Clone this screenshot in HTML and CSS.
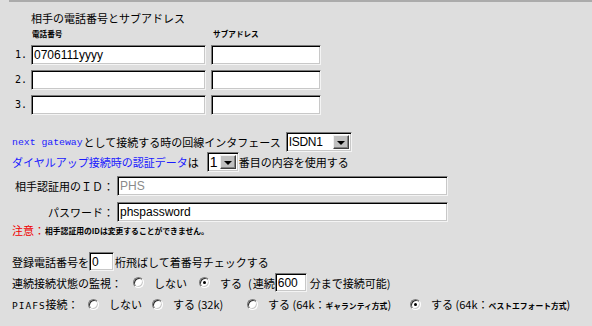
FILE: index.html
```html
<!DOCTYPE html>
<html lang="ja">
<head>
<meta charset="utf-8">
<title>相手の電話番号とサブアドレス</title>
<link rel="stylesheet" href="styles.css">
</head>
<body>
<div class="topline"></div>
<div class="page">
  <div class="heading">相手の電話番号とサブアドレス</div>
  <div class="sublabels">
    <span class="sub-tel">電話番号</span>
    <span class="sub-addr">サブアドレス</span>
  </div>
  <div class="numbers">
    <span class="num">1.</span><input class="field tel" type="text" value="0706111yyyy"><input class="field addr" type="text" value="">
    <span class="num">2.</span><input class="field tel" type="text" value=""><input class="field addr" type="text" value="">
    <span class="num">3.</span><input class="field tel" type="text" value=""><input class="field addr" type="text" value="">
  </div>

  <div class="row gw">
    <span class="blue mono">next gateway</span><span>として接続する時の回線インタフェース</span>
    <span class="select sel-isdn"><span class="sel-val">ISDN1</span><span class="sel-btn"><span class="tri"></span></span></span>
  </div>
  <div class="row dial">
    <span class="blue">ダイヤルアップ接続時の認証データ</span><span>は</span>
    <span class="select sel-num"><span class="sel-val">1</span><span class="sel-btn"><span class="tri"></span></span></span>
    <span>番目の内容を使用する</span>
  </div>
  <div class="row auth id">
    <span class="auth-label">相手認証用のＩＤ：</span>
    <input class="field wide" type="text" value="PHS" disabled>
  </div>
  <div class="row auth pw">
    <span class="auth-label">パスワード：</span>
    <input class="field wide" type="text" value="phspassword">
  </div>
  <div class="row note">
    <span class="red">注意：</span><span class="small">相手認証用のIDは変更することができません。</span>
  </div>

  <div class="row reg">
    <span>登録電話番号を</span><input class="field skip" type="text" value="0"><span>桁飛ばして着番号チェックする</span>
  </div>
  <div class="row mon">
    <span class="lab-mon">連続接続状態の監視：</span>
    <label class="opt o-mon1"><input type="radio" name="mon"><span>しない</span></label>
    <label class="opt"><input type="radio" name="mon" checked><span>する<span class="paren">(</span>連続</span></label>
    <input class="field mins" type="text" value="600"><span>分まで接続可能)</span>
  </div>
  <div class="row piafs">
    <span class="lab-piafs"><span class="mono-p">PIAFS</span>接続：</span>
    <label class="opt o-p1"><input type="radio" name="piafs"><span>しない</span></label>
    <label class="opt o-p2"><input type="radio" name="piafs"><span>する (32k)</span></label>
    <label class="opt o-p3"><input type="radio" name="piafs"><span>する (64k：<span class="small">ギャランティ方式</span>)</span></label>
    <label class="opt"><input type="radio" name="piafs" checked><span>する (64k：<span class="small">ベストエフォート方式</span>)</span></label>
  </div>
</div>
</body>
</html>
```

FILE: styles.css
```css
html, body {
  margin: 0;
  padding: 0;
  background: #dedede;
}
body {
  font-family: "Noto Sans CJK JP", "Noto Sans", sans-serif;
  font-size: 11px;
  color: #000;
  width: 592px;
  height: 326px;
  overflow: hidden;
}
.topline {
  margin-left: 9px;
  height: 0;
  border-top: 2px solid #ababab;
}
.page {
  padding-left: 12px;
}
.heading {
  margin-top: 9px;
  margin-left: 19px;
  height: 14px;
  line-height: 14px;
  font-size: 11px;
}
.sublabels {
  margin-top: 4px;
  height: 10px;
  line-height: 10px;
  font-size: 7.6px;
  font-weight: bold;
}
.sub-tel { margin-left: 20px; }
.sub-addr { margin-left: 149px; }
.numbers {
  margin-top: 6px;
  display: grid;
  grid-template-columns: 19px 180px 110px;
  row-gap: 5px;
  grid-auto-rows: 20px;
}
.tel { width: 175px; }
.addr { width: 110px; }
.num {
  padding-left: 3px;
  font-family: "DejaVu Sans Mono", monospace;
  font-size: 10px;
  line-height: 20px;
}
.field {
  box-sizing: border-box;
  margin: 0;
  height: 20px;
  border: 1px solid;
  border-color: #7b7b7b #f4f4f4 #f4f4f4 #7b7b7b;
  box-shadow: inset 1px 1px 0 #000, inset -1px -1px 0 #c8c8c8;
  background: #fff;
  padding: 0 0 0 2px;
  font-family: "Liberation Sans", Arial, sans-serif;
  font-size: 12px;
  color: #000;
  outline: none;
}
.field:disabled {
  color: #8a8a8a;
  background: #fff;
}
.row {
  display: flex;
  align-items: center;
  white-space: nowrap;
}
.blue { color: #1a1aff; }
.red { color: #f00000; }
.mono {
  font-family: "Liberation Mono", "DejaVu Sans Mono", monospace;
  font-size: 9.8px;
  margin-right: 1px;
}
.gw {
  margin-top: 17px;
  height: 20px;
}
.dial {
  height: 20px;
}
.select {
  box-sizing: border-box;
  display: inline-flex;
  align-items: center;
  height: 20px;
  background: #fff;
  border: 1px solid;
  border-color: #7b7b7b #f4f4f4 #f4f4f4 #7b7b7b;
  box-shadow: inset 1px 1px 0 #000, inset -1px -1px 0 #c8c8c8;
  padding: 0 2px 0 2px;
}
.sel-isdn {
  width: 66px;
  margin-left: 5px;
}
.sel-num {
  width: 32px;
  margin-left: 8px;
}
.sel-val {
  flex: 1;
  font-family: "Liberation Sans", Arial, sans-serif;
  font-size: 12px;
  letter-spacing: -0.3px;
  line-height: 16px;
}
.sel-num .sel-val {
  font-size: 14px;
}
.sel-btn {
  box-sizing: border-box;
  width: 16px;
  height: 14px;
  background: #c0c0c0;
  border: 1px solid;
  border-color: #f0f0f0 #404040 #404040 #f0f0f0;
  box-shadow: inset -1px -1px 0 #808080;
  display: flex;
  align-items: center;
  justify-content: center;
}
.tri {
  width: 0;
  height: 0;
  border-left: 4px solid transparent;
  border-right: 4px solid transparent;
  border-top: 4px solid #000;
  margin-top: 1px;
}
.auth {
  height: 20px;
}
.id { margin-top: 4px; }
.pw { margin-top: 6px; }
.auth-label {
  width: 102px;
  text-align: right;
  margin-right: 3px;
}
.wide { width: 331px; }
.note {
  margin-top: 2px;
  height: 12px;
}
.small {
  font-size: 7.8px;
  font-weight: bold;
}
.note .red { width: 33px; }
.reg {
  margin-top: 16px;
  height: 19px;
}
.skip {
  width: 25px;
  height: 19px;
  margin-right: 1px;
}
.mon {
  margin-top: 2px;
  height: 19px;
}
.paren {
  margin: 0 1px 0 6px;
}
.mins {
  width: 32px;
  height: 19px;
  margin-right: 3px;
}
.lab-mon { width: 121px; }
.opt {
  display: inline-flex;
  align-items: center;
}
.o-mon1 { width: 66px; }
.o-mon1 input { margin-right: 13px; }
.piafs {
  margin-top: 3px;
  height: 18px;
}
.lab-piafs { width: 76px; }
.mono-p {
  font-family: "DejaVu Sans Mono", monospace;
  font-size: 9.5px;
  letter-spacing: 1px;
}
.o-p1 { width: 64px; }
.o-p2 { width: 95px; }
.o-p3 { width: 163px; }
.opt input {
  -webkit-appearance: none;
  appearance: none;
  box-sizing: border-box;
  width: 11px;
  height: 11px;
  margin: 0 10px 0 0;
  border-radius: 50%;
  border: 1px solid;
  border-color: #7b7b7b #ffffff #ffffff #7b7b7b;
  box-shadow: inset 1px 1px 0 #303030, inset -1px -1px 0 #c8c8c8;
  background: #fff;
  position: relative;
}
.opt input:checked::after {
  content: "";
  position: absolute;
  left: 3px;
  top: 3px;
  width: 3px;
  height: 3px;
  border-radius: 50%;
  background: #000;
}
```
